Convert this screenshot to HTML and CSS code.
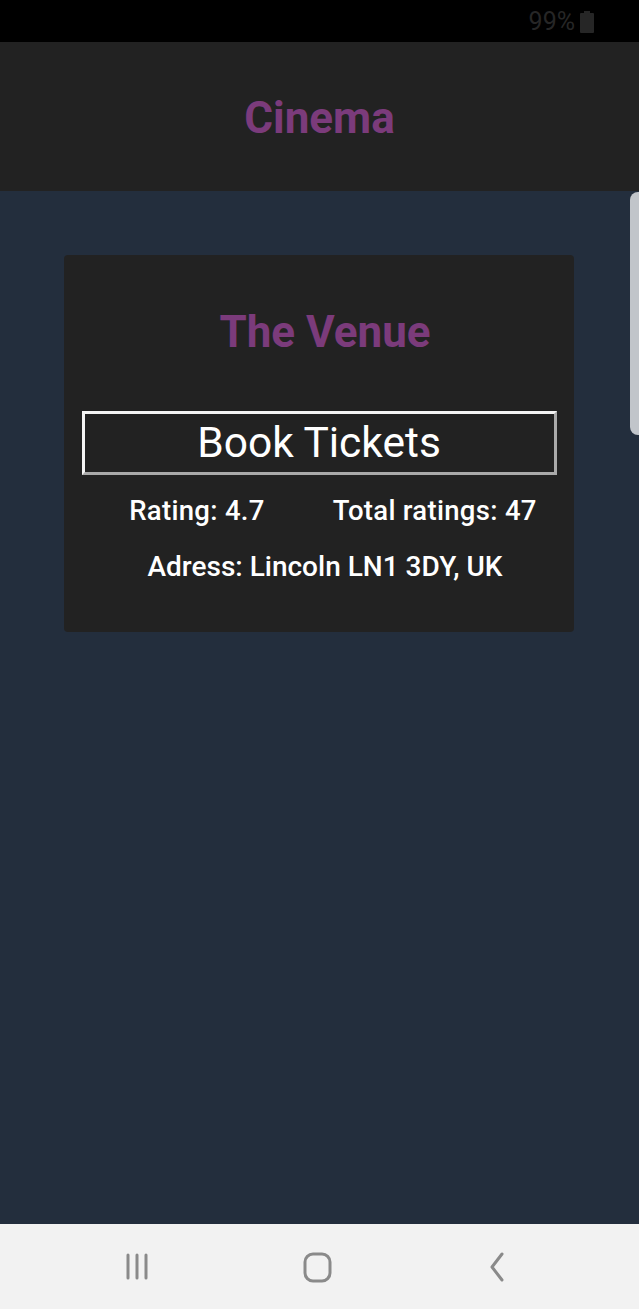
FILE: index.html
```html
<!DOCTYPE html>
<html>
<head>
<meta charset="utf-8">
<link rel="stylesheet" href="styles.css">
</head>
<body>
<div class="phone">
  <div class="status">
    <span class="pct">99%</span>
    <svg class="battery" width="16" height="22" viewBox="0 0 16 22"><rect x="5" y="0" width="6" height="3" fill="#262626"/><rect x="1" y="2" width="14" height="20" rx="1" fill="#262626"/></svg>
  </div>
  <header class="appbar"><h1 class="title">Cinema</h1></header>
  <main class="content">
    <section class="card">
      <h2 class="venue">The Venue</h2>
      <button class="book">Book Tickets</button>
      <div class="stats">
        <span>Rating: 4.7</span>
        <span>Total ratings: 47</span>
      </div>
      <p class="address">Adress: Lincoln LN1 3DY, UK</p>
    </section>
    <div class="scrollbar"></div>
  </main>
  <nav class="navbar">
    <svg width="30" height="30" viewBox="0 0 30 30"><g stroke="#8a8a8a" stroke-width="3" stroke-linecap="round"><line x1="5" y1="3" x2="5" y2="26"/><line x1="14" y1="3" x2="14" y2="26"/><line x1="23" y1="3" x2="23" y2="26"/></g></svg>
    <svg width="32" height="32" viewBox="0 0 32 32"><rect x="3" y="3" width="25" height="27" rx="8" fill="none" stroke="#8a8a8a" stroke-width="3"/></svg>
    <svg width="30" height="32" viewBox="0 0 30 32"><polyline points="18,3 8,16 18,29" fill="none" stroke="#8a8a8a" stroke-width="3" stroke-linecap="round" stroke-linejoin="round"/></svg>
  </nav>
</div>
</body>
</html>
```
FILE: styles.css
```css
* { box-sizing: border-box; }
html, body { margin: 0; padding: 0; }
body { font-family: Roboto, "Noto Sans", sans-serif; background: #232e3d; }
.phone { width: 639px; height: 1309px; display: flex; flex-direction: column; }
.status { height: 42px; background: #000; display: flex; align-items: center; justify-content: flex-end; padding-right: 44px; gap: 4px; }
.pct { color: #262626; font-size: 25px; font-family: Roboto, sans-serif; }
.battery { margin-top: 1px; }
.appbar { height: 149px; background: #222222; display: flex; align-items: center; justify-content: center; }
.title { margin: 0; color: #7b3b7b; font-size: 44px; font-weight: 700; padding-top: 2px; }
.content { flex: 1; background: #232e3d; position: relative; padding-top: 64px; }
.card { margin-left: 64px; width: 510px; height: 377px; background: #222222; border-radius: 4px; display: flex; flex-direction: column; align-items: center; padding-top: 49px; }
.venue { margin: 0 0 0 12px; color: #7b3b7b; font-size: 44px; font-weight: 700; line-height: 56px; }
.book { margin-top: 51px; width: 475px; height: 64px; background: #222222; color: #fff; font-family: Roboto, sans-serif; font-size: 42.5px; font-weight: 400; border: 3px solid #aaaaaa; border-top-color: #f4f4f4; border-left-color: #f4f4f4; padding: 0; line-height: 56px; }
.stats { display: flex; gap: 68px; margin-top: 18px; color: #fff; font-size: 27.5px; font-weight: 500; letter-spacing: 0.3px; line-height: 36px; margin-left: 28px; }
.address { margin: 20px 0 0 12px; color: #fff; font-size: 28px; font-weight: 500; letter-spacing: 0; line-height: 36px; }
.scrollbar { position: absolute; right: 0; top: 1px; width: 9px; height: 243px; background: #c1c5ca; border-radius: 8px 0 0 8px; }
.navbar { height: 85px; background: #f2f2f2; display: flex; align-items: center; justify-content: center; gap: 0; padding-top: 1px; }
.navbar svg:nth-child(1) { margin-left: -3px; }
.navbar svg:nth-child(2) { margin-left: 149px; }
.navbar svg:nth-child(3) { margin-left: 150px; }
```
